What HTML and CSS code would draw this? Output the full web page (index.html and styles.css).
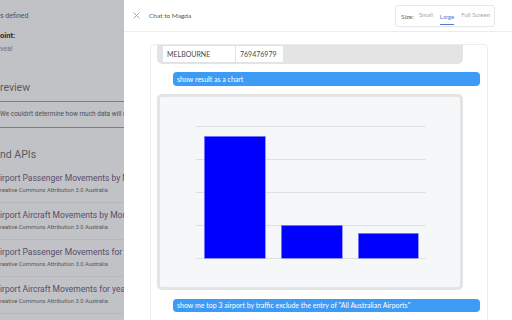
FILE: index.html
```html
<!DOCTYPE html>
<html>
<head>
    <title>Chat to Magda</title>
    <link rel="stylesheet" href="styles.css">
</head>
<body>
    <div class="page">
        <p class="meta">s defined</p>
        <p class="meta-label">oint:</p>
        <p class="meta-value">veal</p>
        <h2 class="section-title preview">review</h2>
        <div class="notice">We couldn't determine how much data will result from this query</div>
        <h2 class="section-title apis">nd APIs</h2>
        <ul class="dist-list">
            <li>
                <span class="dist-title">irport Passenger Movements by Month</span>
                <span class="dist-licence">reative Commons Attribution 3.0 Australia</span>
            </li>
            <li>
                <span class="dist-title">irport Aircraft Movements by Month</span>
                <span class="dist-licence">reative Commons Attribution 3.0 Australia</span>
            </li>
            <li>
                <span class="dist-title">irport Passenger Movements for years</span>
                <span class="dist-licence">reative Commons Attribution 3.0 Australia</span>
            </li>
            <li>
                <span class="dist-title">irport Aircraft Movements for years</span>
                <span class="dist-licence">reative Commons Attribution 3.0 Australia</span>
            </li>
        </ul>
    </div>

    <aside class="drawer">
        <header class="drawer-head">
            <button class="close" title="Close">
                <svg width="7" height="7" viewBox="0 0 7 7"><path d="M0.5 0.5L6.5 6.5M6.5 0.5L0.5 6.5" stroke="#9a9a9a" stroke-width="0.9"/></svg>
            </button>
            <span class="drawer-title">Chat to Magda</span>
            <div class="size-switch">
                <span class="size-label">Size:</span>
                <span class="size-option">Small</span>
                <span class="size-option active">Large</span>
                <span class="size-option">Full Screen</span>
            </div>
        </header>
        <div class="chat">
            <div class="thread">
                <div class="result-table">
                    <table>
                        <tr>
                            <td class="col-name">MELBOURNE</td>
                            <td class="col-num">769476979</td>
                        </tr>
                    </table>
                </div>
                <div class="question">show result as a chart</div>
                <div class="chart-card">
                    <svg width="300" height="190" viewBox="0 0 300 190">
                        <g stroke="#dfe0e3" stroke-width="1">
                            <line x1="36" y1="29.5" x2="266" y2="29.5"/>
                            <line x1="36" y1="62.5" x2="266" y2="62.5"/>
                            <line x1="36" y1="95.5" x2="266" y2="95.5"/>
                            <line x1="36" y1="128.5" x2="266" y2="128.5"/>
                            <line x1="36" y1="161.5" x2="266" y2="161.5"/>
                        </g>
                        <g fill="#0000ff" stroke="#8a8aff" stroke-width="0.6">
                            <rect x="44.3" y="39.3" width="61" height="122"/>
                            <rect x="121.3" y="128.3" width="61" height="33"/>
                            <rect x="198.3" y="136.3" width="60" height="25"/>
                        </g>
                    </svg>
                </div>
                <div class="question last">show me top 3 airport by traffic exclude the entry of "All Australian Airports"</div>
            </div>
        </div>
    </aside>
</body>
</html>
```

FILE: styles.css
```css
body {
    margin: 0;
    width: 512px;
    height: 320px;
    display: flex;
    overflow: hidden;
    font-family: 'Lato', 'Liberation Sans', sans-serif;
    background-color: #ffffff;
}

/* dimmed page behind the drawer */
.page {
    width: 124px;
    flex-shrink: 0;
    background-color: #c1c2c6;
    overflow: hidden;
    white-space: nowrap;
    font-family: 'Roboto', 'Liberation Sans', sans-serif;
}

.page p {
    margin: 0;
    line-height: 10px;
}

.meta {
    font-size: 7px;
    color: #505055;
    margin-top: 11px !important;
}

.meta-label {
    font-size: 7.5px;
    font-weight: bold;
    color: #2a2a2e;
    margin-top: 10px !important;
}

.meta-value {
    font-size: 7px;
    color: #727277;
    margin-top: 3px !important;
}

.section-title {
    margin: 0;
    font-size: 10.5px;
    line-height: 16px;
    font-weight: normal;
    color: #5a5a5f;
}

.section-title.preview {
    margin-top: 26px;
}

.notice {
    margin-top: 5px;
    border-top: 1.5px solid #3f97a8;
    border-bottom: 1.5px solid #3f97a8;
    font-size: 6.5px;
    color: #4e4e53;
    height: 25px;
    line-height: 25px;
}

.section-title.apis {
    margin-top: 19px;
}

.dist-list {
    list-style: none;
    margin: 3px 0 0 0;
    padding: 0;
}

.dist-list li {
    display: flex;
    flex-direction: column;
    box-sizing: border-box;
    height: 37px;
    padding-top: 6px;
    border-bottom: 1px solid #b6b7bb;
}

.dist-title {
    font-size: 8.5px;
    color: #594d6a;
    line-height: 13px;
}

.dist-licence {
    font-size: 5.8px;
    color: #56565b;
    line-height: 10px;
}

/* chat drawer */
.drawer {
    flex: 1;
    display: flex;
    flex-direction: column;
    background-color: #ffffff;
}

.drawer-head {
    height: 31px;
    border-bottom: 1px solid #ececec;
    display: flex;
    align-items: center;
    padding-left: 9px;
}

.close {
    background: none;
    border: none;
    padding: 0;
    width: 7px;
    height: 7px;
    display: flex;
    cursor: pointer;
}

.drawer-title {
    margin-left: 9px;
    font-size: 6.5px;
    color: #555555;
}

.size-switch {
    margin-left: auto;
    margin-right: 17px;
    height: 20px;
    border: 1px solid #e7e7e7;
    border-radius: 3px;
    display: flex;
    align-items: center;
    padding: 0 4px 0 5px;
    gap: 7px;
    font-size: 6px;
    color: #a6a6a6;
}

.size-label {
    font-size: 6.5px;
    color: #6a6a6a;
    margin-top: 2px;
    margin-right: -2px;
}

.size-option {
    height: 20px;
    line-height: 18px;
    box-sizing: border-box;
}

.size-option.active {
    color: #4a7bd8;
    border-bottom: 1.5px solid #4a7bd8;
    height: 17px;
    line-height: 18px;
    margin-top: 2px;
}

.chat {
    flex: 1;
    padding: 12px 24px 0 26px;
    overflow: hidden;
}

.thread {
    border: 1px solid #ececec;
    border-bottom: none;
    border-radius: 5px 5px 0 0;
    height: 300px;
}

.result-table {
    width: 301px;
    margin-left: 6px;
    padding: 0 0 1px 5px;
    background-color: #e4e4e4;
    border-radius: 0 0 5px 5px;
}

.result-table table {
    border-collapse: collapse;
}

.result-table td {
    background-color: #ffffff;
    border: 1px solid #e2e2e2;
    height: 16px;
    padding: 0 0 0 4px;
    font-size: 7px;
    color: #4a4a4a;
}

.col-name {
    width: 68px;
}

.col-num {
    width: 43px;
}

.question {
    margin: 8px 7px 0 22px;
    height: 14px;
    line-height: 14px;
    padding-left: 4px;
    border-radius: 4px;
    background-color: #3d9bf5;
    color: #ffffff;
    font-size: 7px;
    white-space: nowrap;
    overflow: hidden;
}

.question.last {
    margin-top: 9px;
    height: 13px;
    line-height: 13px;
}

.chart-card {
    margin: 8px 0 0 6px;
    width: 300px;
    height: 190px;
    border: 3px solid #e4e4e4;
    border-radius: 5px;
    background-color: #f6f7f9;
}

.chart-card svg {
    display: block;
}
```
